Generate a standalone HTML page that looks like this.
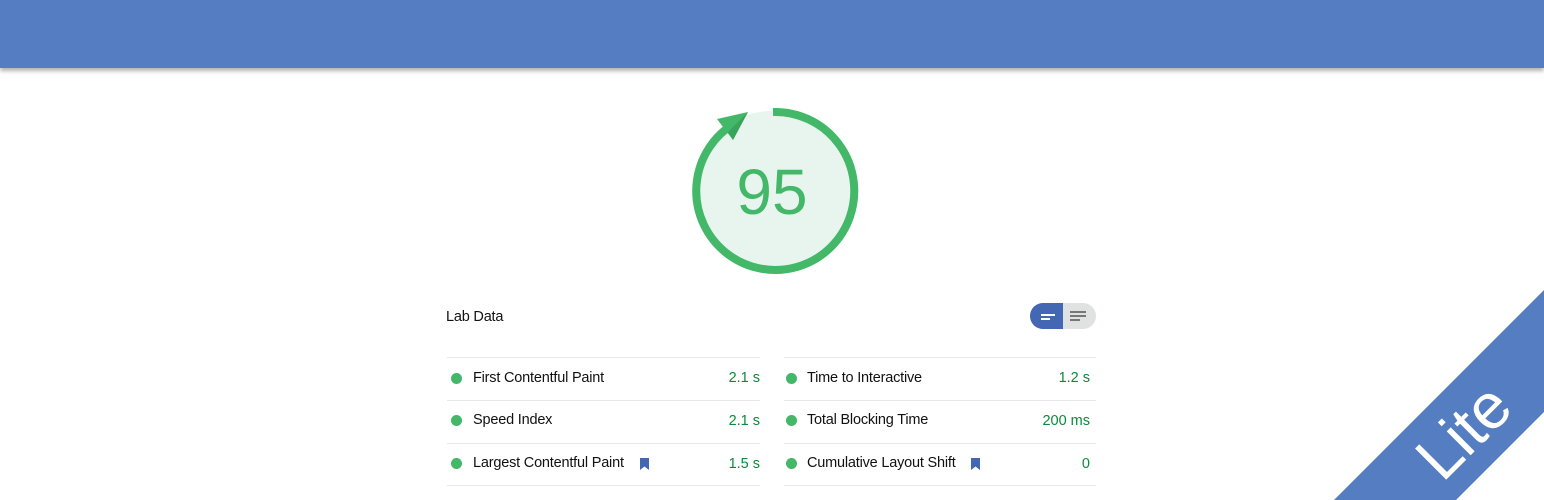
<!DOCTYPE html>
<html><head><style>
body{margin:0;width:1544px;height:500px;overflow:hidden;background:#fff;font-family:"Liberation Sans",sans-serif;position:relative}
.hdr{position:absolute;left:0;top:0;width:1544px;height:68px;background:#547ec1;box-shadow:0 3px 4px rgba(0,0,0,.3)}
.t{position:absolute;font-size:14.5px;color:#111;letter-spacing:-0.2px}
.v{position:absolute;font-size:14.5px;color:#0b8a3a;text-align:right}
.dot{position:absolute;width:11px;height:11px;border-radius:50%;background:#42b868}
.ln{position:absolute;height:1px;background:#e8e8e8}
</style></head><body>
<div class="hdr"></div>
<svg style="position:absolute;left:0;top:0" width="1544" height="500">
<circle cx="772" cy="191" r="80" fill="#e8f5ee"/>
<path d="M773 112 A79 79 0 1 1 735 123" fill="none" stroke="#42b868" stroke-width="8"/>
<polygon points="717,119 748,112 733,140" fill="#42b868"/>
<polygon points="748,112 733,140 728,132" fill="#3aa35c"/>
<text x="772" y="214" text-anchor="middle" font-family="Liberation Sans" font-size="64" fill="#42b868">95</text>
<polygon points="1544,290 1544,412 1456,500 1334,500" fill="#547ec1"/>
<text x="0" y="0" transform="translate(1467,435) rotate(-45)" text-anchor="middle" font-family="Liberation Sans" font-size="64" fill="#fff" dominant-baseline="middle">Lite</text>
<rect x="1030" y="303" width="66" height="26" rx="13" fill="#e0e1e1"/>
<path d="M1043 303 H1063 V329 H1043 A13 13 0 0 1 1043 303Z" fill="#4467b3"/>
<rect x="1041" y="314" width="14" height="2" fill="#fff"/><rect x="1041" y="318" width="9" height="2" fill="#fff"/>
<rect x="1070" y="311" width="16" height="2" fill="#777"/><rect x="1070" y="315" width="16" height="2" fill="#777"/><rect x="1070" y="319" width="10" height="2" fill="#777"/>
<path d="M640 458 h9 v12 l-4.5 -3.5 l-4.5 3.5z" fill="#4467b3"/>
<path d="M971 458 h9 v12 l-4.5 -3.5 l-4.5 3.5z" fill="#4467b3"/>
</svg>
<div class="t" style="left:446px;top:309px">Lab Data</div>
<div class="ln" style="left:447px;top:357px;width:313px"></div>
<div class="ln" style="left:447px;top:400px;width:313px"></div>
<div class="ln" style="left:447px;top:443px;width:313px"></div>
<div class="ln" style="left:447px;top:485px;width:313px"></div>
<div class="ln" style="left:784px;top:357px;width:312px"></div>
<div class="ln" style="left:784px;top:400px;width:312px"></div>
<div class="ln" style="left:784px;top:443px;width:312px"></div>
<div class="ln" style="left:784px;top:485px;width:312px"></div>
<div class="dot" style="left:451px;top:373px"></div><div class="t" style="left:473px;top:370px">First Contentful Paint</div><div class="v" style="left:660px;width:100px;top:370px">2.1 s</div>
<div class="dot" style="left:451px;top:415px"></div><div class="t" style="left:473px;top:412px">Speed Index</div><div class="v" style="left:660px;width:100px;top:413px">2.1 s</div>
<div class="dot" style="left:451px;top:458px"></div><div class="t" style="left:473px;top:455px">Largest Contentful Paint</div><div class="v" style="left:660px;width:100px;top:456px">1.5 s</div>
<div class="dot" style="left:786px;top:373px"></div><div class="t" style="left:807px;top:370px">Time to Interactive</div><div class="v" style="left:990px;width:100px;top:370px">1.2 s</div>
<div class="dot" style="left:786px;top:415px"></div><div class="t" style="left:807px;top:412px">Total Blocking Time</div><div class="v" style="left:990px;width:100px;top:413px">200 ms</div>
<div class="dot" style="left:786px;top:458px"></div><div class="t" style="left:807px;top:455px">Cumulative Layout Shift</div><div class="v" style="left:990px;width:100px;top:456px">0</div>
</body></html>
